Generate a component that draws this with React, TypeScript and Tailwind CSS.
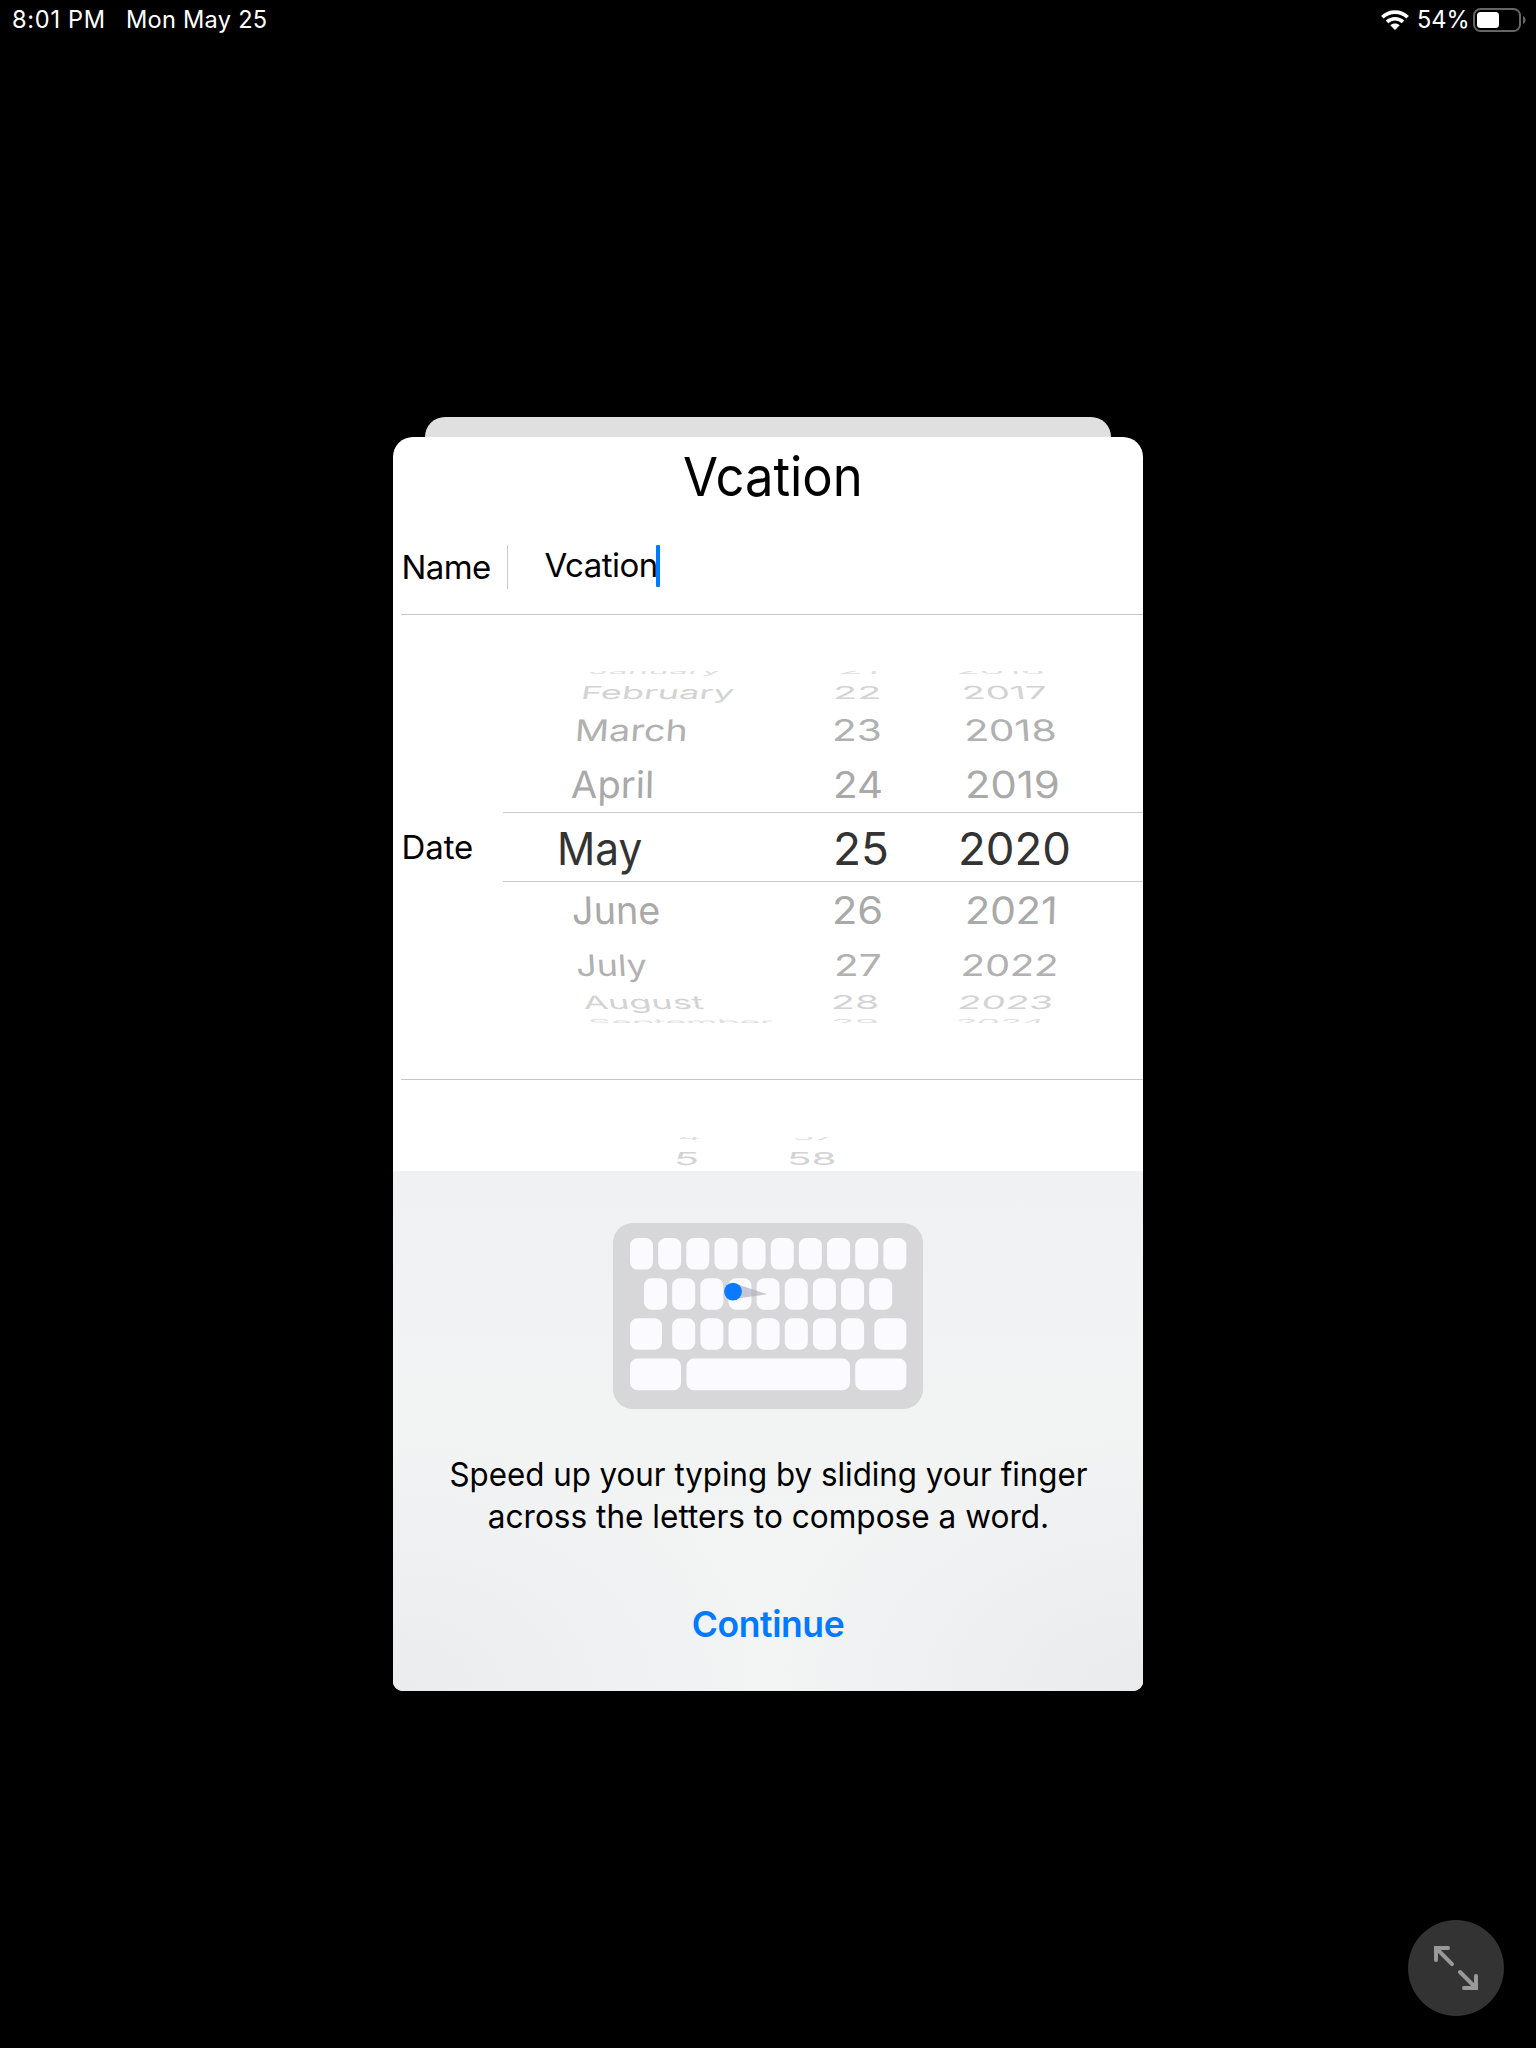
import React from "react";

type Cell = { label: string; x: number; sx: number; skew?: number };

// Geometry of the nine visible wheel rows: row class, vertical squash, optical shift.
const rowStyles: { cls: string; sy: number; dy: number }[] = [
  { cls: "h-[14px] text-[40px] text-[#e0e0e0]", sy: 0.2, dy: 0.6 },
  { cls: "h-[27px] text-[40px] text-[#d3d3d3]", sy: 0.447, dy: 1.6 },
  { cls: "h-[49px] text-[40px] text-[#b1b1b1]", sy: 0.74, dy: 2 },
  { cls: "h-[58px] text-[40px] text-[#a9a9a9]", sy: 0.935, dy: 1.8 },
  { cls: "h-[70px] border-y border-[#cbcbcd] text-[45.5px] text-[#333333]", sy: 1, dy: 1.5 },
  { cls: "h-[56.5px] text-[40px] text-[#a9a9a9]", sy: 0.945, dy: 1.2 },
  { cls: "h-[51.5px] text-[40px] text-[#b1b1b1]", sy: 0.74, dy: 1.2 },
  { cls: "h-[24.5px] text-[40px] text-[#d3d3d3]", sy: 0.46, dy: 1 },
  { cls: "h-[16px] text-[40px] text-[#e0e0e0]", sy: 0.2, dy: 0.6 },
];

const months: Cell[] = [
  { label: "January", x: 86, sx: 0.863, skew: -20 },
  { label: "February", x: 77.5, sx: 0.905, skew: -10 },
  { label: "March", x: 72, sx: 0.945, skew: -4 },
  { label: "April", x: 68, sx: 0.955, skew: -1 },
  { label: "May", x: 53.6, sx: 0.932 },
  { label: "June", x: 69, sx: 0.944, skew: 1.5 },
  { label: "July", x: 73, sx: 0.898, skew: 3.5 },
  { label: "August", x: 79.5, sx: 0.9, skew: 10 },
  { label: "September", x: 85, sx: 0.896, skew: 20 },
];

const days: Cell[] = [
  { label: "21", x: 37.5, sx: 1.01 },
  { label: "22", x: 33, sx: 0.99 },
  { label: "23", x: 31.8, sx: 1.015 },
  { label: "24", x: 33, sx: 1.01 },
  { label: "25", x: 33, sx: 1.01 },
  { label: "26", x: 32, sx: 1.04 },
  { label: "27", x: 33.8, sx: 1.015 },
  { label: "28", x: 31.3, sx: 0.98 },
  { label: "29", x: 31, sx: 0.969 },
];

const years: Cell[] = [
  { label: "2016", x: 25, sx: 0.99, skew: 20 },
  { label: "2017", x: 32, sx: 0.965, skew: 10 },
  { label: "2018", x: 33.5, sx: 1.02, skew: 4 },
  { label: "2019", x: 35.3, sx: 1.045, skew: 1.5 },
  { label: "2020", x: 28, sx: 1 },
  { label: "2021", x: 35, sx: 1.025, skew: -1.5 },
  { label: "2022", x: 31.3, sx: 0.99, skew: -3.5 },
  { label: "2023", x: 27.5, sx: 0.965, skew: -10 },
  { label: "2024", x: 25, sx: 0.9, skew: -20 },
];

const hours: Cell[] = [
  { label: "4", x: 27.5, sx: 0.93, skew: -16 },
  { label: "5", x: 24, sx: 1.03, skew: -5 },
];

const minutes: Cell[] = [
  { label: "57", x: 42, sx: 0.922 },
  { label: "58", x: 37.2, sx: 1.01 },
];

function Wheel({ cells, className }: { cells: Cell[]; className: string }) {
  return (
    <div className={`-mt-[7.5px] flex flex-col ${className}`}>
      {cells.map((c, i) => (
        <div key={c.label} className={`flex shrink-0 items-center leading-none ${rowStyles[i].cls}`}>
          <span
            className="origin-left whitespace-nowrap"
            style={{
              marginLeft: c.x,
              transform: `translateY(${rowStyles[i].dy}px) skewX(${c.skew ?? 0}deg) scale(${c.sx}, ${rowStyles[i].sy})`,
            }}
          >
            {c.label}
          </span>
        </div>
      ))}
    </div>
  );
}

function StatusBar() {
  return (
    <header className="flex h-[39px] items-center pl-[12px] pr-[10px] text-[23.6px] leading-none text-white">
      <span className="w-[114px] tracking-[0.7px]">8:01 PM</span>
      <span className="tracking-[0.25px]">Mon May 25</span>
      <svg className="ml-auto mr-[8px] mt-[1px]" width="28" height="20" viewBox="0 0 28 20" fill="none" stroke="white" strokeWidth="3.7">
        <path d="M1.4 7.2C8.3 0.3 19.7 0.3 26.6 7.2" />
        <path d="M6 11.9c4.4-4.2 11.6-4.2 16 0" />
        <path d="M9.3 15.2c2.6-2.4 6.8-2.4 9.4 0L14 19.9z" fill="white" stroke="none" />
      </svg>
      <span className="mr-[4px] w-[52px]">54%</span>
      <svg className="mt-[1px]" width="53" height="24" viewBox="0 0 53 24">
        <rect x="1" y="1" width="46" height="22" rx="6.5" fill="none" stroke="#666" strokeWidth="2" />
        <rect x="4" y="4" width="22" height="16" rx="3.5" fill="white" />
        <path d="M50 8c3.4 1.4 3.4 6.6 0 8z" fill="#666" />
      </svg>
    </header>
  );
}

const pitch = 28.15;
const keyRow = (x: number, y: number, n: number) =>
  Array.from({ length: n }, (_, i) => ({ x: x + i * pitch, y, w: 23 }));
const keys = [
  ...keyRow(17, 15, 10),
  ...keyRow(31, 55.2, 9),
  { x: 17, y: 95.2, w: 32 },
  ...keyRow(59.2, 95.2, 7),
  { x: 261.3, y: 95.2, w: 32 },
  { x: 17, y: 135.6, w: 51 },
  { x: 73.5, y: 135.6, w: 163.5 },
  { x: 242.2, y: 135.6, w: 51.2 },
];

function KeyboardArt() {
  return (
    <svg className="mt-[52px]" width="310" height="186" viewBox="0 0 310 186">
      <rect width="310" height="186" rx="20" fill="#d7d6d9" />
      {keys.map((k, i) => (
        <rect key={i} x={k.x} y={k.y} width={k.w} height="31.6" rx="7.5" fill="#fbfaff" />
      ))}
      <path d="M122 60.5 154 71.2 124 75.5z" fill="#a9adb9" fillOpacity="0.65" />
      <circle cx="120" cy="68.6" r="8.9" fill="#0a7aff" />
    </svg>
  );
}

export default function App() {
  return (
    <div className="flex h-[2048px] w-[1536px] flex-col overflow-hidden bg-black font-['Inter',sans-serif] text-black">
      <StatusBar />

      <main className="mt-[378px] flex flex-col items-center">
        <div className="h-5 w-[686px] rounded-t-[20px] bg-[#e0e0e0]" />
        <section className="flex h-[1254px] w-[750px] flex-col overflow-hidden rounded-b-[10px] rounded-t-[20px] bg-white">
          <h1 className="flex h-[79px] shrink-0 items-center pl-[289.5px] text-[54px] leading-none">
            <span className="origin-left scale-x-[0.94]">Vcation</span>
          </h1>

          <div className="ml-2 flex h-[99px] shrink-0 items-center border-b border-[#c6c6c8] text-[33px] leading-none">
            <label className="w-[106px] pl-[0.5px] pt-1 tracking-[-0.57px]">Name</label>
            <div className="mt-1 h-11 w-px bg-[#c8c8ca]" />
            <span className="ml-[36.5px] tracking-[-0.5px]">Vcation</span>
            <span className="-ml-[2px] mt-[2px] h-[42px] w-1 rounded-[1px] bg-[#007aff]" />
          </div>

          <div className="ml-2 flex h-[465px] shrink-0 items-center border-b border-[#c6c6c8]">
            <span className="w-[102px] shrink-0 pl-[0.5px] text-[33px] leading-none tracking-[-0.11px]">Date</span>
            <div className="flex h-[351.5px] grow overflow-hidden">
              <Wheel cells={months} className="w-[297px]" />
              <Wheel cells={days} className="w-[130px]" />
              <Wheel cells={years} className="grow" />
            </div>
          </div>

          <div className="flex h-[91px] shrink-0 pl-[257px] pt-[57px]">
            <div className="flex h-[34px] grow overflow-hidden">
              <Wheel cells={hours} className="w-[100px]" />
              <Wheel cells={minutes} className="grow" />
            </div>
          </div>

          <div className="flex grow flex-col items-center bg-[radial-gradient(ellipse_at_0%_100%,#ebecee_0%,transparent_36%),radial-gradient(ellipse_at_100%_100%,#eaebed_0%,transparent_36%),linear-gradient(#f0f1f3,#f2f4f4_45%,#f3f4f4)]">
            <KeyboardArt />
            <p className="mt-[44px] text-center text-[33px] leading-[42px]">
              <span className="block scale-x-[0.948]">Speed up your typing by sliding your finger</span>
              <span className="block scale-x-[0.957]">across the letters to compose a word.</span>
            </p>
            <button className="mt-[64px] h-12 text-[35.5px] font-semibold leading-none tracking-[-0.42px] text-[#007aff]">Continue</button>
          </div>
        </section>
      </main>

      <button className="ml-[1408px] mt-[229px] flex size-24 shrink-0 items-center justify-center rounded-full bg-[#333333]" aria-label="Expand">
        <svg width="96" height="96" viewBox="0 0 96 96" fill="none" stroke="#999" strokeWidth="4" strokeLinecap="round">
          <path d="M40 28H28V40M28.5 28.5 44 44.2" />
          <path d="M56 68H68V56M67.5 67.5 52 52" />
        </svg>
      </button>
    </div>
  );
}
